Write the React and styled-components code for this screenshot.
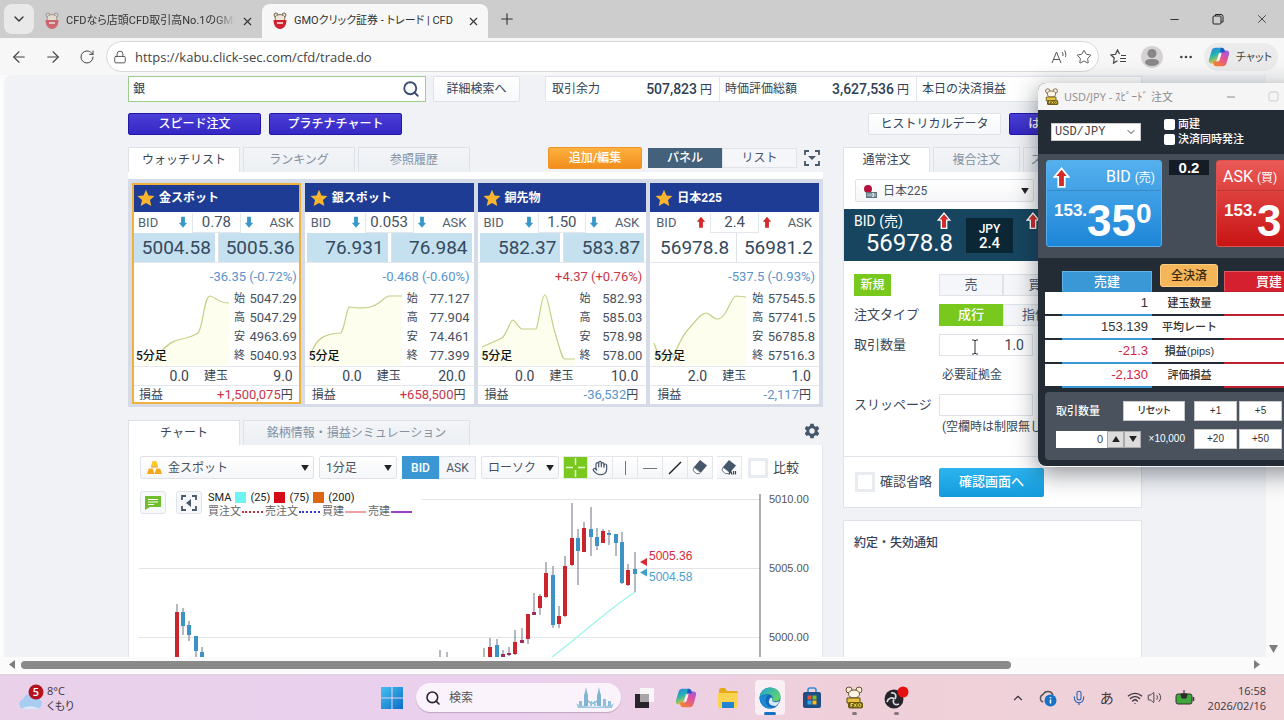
import React from "react";
import styled, { createGlobalStyle, css } from "styled-components";
import {
  ArrowLeft, ArrowRight, RotateCw, Lock, Star, X, Plus, Minus, ChevronDown, ChevronUp,
  Search, Ellipsis, Mic, Wifi, Volume2, Hand,
} from "lucide-react";

const webFont = `Roboto, "Noto Sans CJK JP", sans-serif`;
const uiFont = `"Open Sans", "Noto Sans CJK JP", sans-serif`;
const winFont = `"Liberation Sans", "Noto Sans CJK JP", sans-serif`;

const Global = createGlobalStyle`
  * { box-sizing: border-box; }
  body { margin: 0; overflow: hidden; font-family: ${webFont}; font-size: 12px; line-height: 16px; color: #3a4656; }
  button, input, select { font: inherit; color: inherit; margin: 0; padding: 0; border: 0; background: none; }
  svg { display: block; flex: none; }
  a { color: inherit; text-decoration: none; }
`;

const Desktop = styled.div`
  height: 100vh; display: flex; flex-direction: column; overflow: hidden; position: relative; background: #f7f7f7;
`;

/* ---------- browser chrome ---------- */
const TabStrip = styled.div`
  height: 38px; flex: none; display: flex; align-items: center; background: #cdcdcd; padding-left: 4px; font-family: ${uiFont}; color: #333;
`;
const StripButton = styled.button`
  width: ${p => p.$w || 30}px; height: 30px; border-radius: 8px; display: flex; align-items: center; justify-content: center;
  background: ${p => (p.$fill ? "#e9e9e9" : "transparent")};
`;
const BrowserTab = styled.div`
  display: flex; align-items: center; gap: 6px; height: 34px; padding: 0 8px 0 10px; align-self: flex-end; width: ${p => p.$w}px;
  font-size: 11px; font-family: ${webFont}; white-space: nowrap; font-feature-settings: "palt";
  border-radius: 8px 8px 0 0; background: ${p => (p.$active ? "#f7f7f7" : "transparent")};
  > span { flex: 1; overflow: hidden; ${p => !p.$active && css`mask-image: linear-gradient(90deg, #000 88%, transparent);`} }
`;
const WindowButtons = styled.div`
  margin-left: auto; display: flex; gap: 14px; padding-right: 7px;
`;
const Toolbar = styled.div`
  height: 37px; flex: none; display: flex; align-items: center; background: #f7f7f7; padding: 0 6px 0 4px; font-family: ${uiFont}; color: #444;
`;
const NavButton = styled.button`
  width: ${p => p.$w || 34}px; height: 30px; display: flex; align-items: center; justify-content: center;
`;
const Address = styled.label`
  flex: 1; height: 31px; display: flex; align-items: center; gap: 8px; border: 1px solid #d8d8d8; border-radius: 16px; background: #fff; padding: 0 6px; margin-left: 4px;
  input { flex: 1; outline: 0; font-size: 13px; color: #444; }
`;
const ChatPill = styled.button`
  display: flex; align-items: center; gap: 6px; height: 28px; width: 74px; padding: 0 4px; border-radius: 14px; background: #ebebeb; font-size: 11px; font-feature-settings: "palt"; white-space: nowrap;
`;

/* ---------- scroll frame ---------- */
const Frame = styled.div`
  flex: 1; min-height: 0; display: grid; grid-template: minmax(0, 1fr) 15px / minmax(0, 1fr) 15px; padding: 0 3px 2px 4px; background: #fbfbfb;
  border-bottom: 1px solid #ddd4dd;
`;
const Page = styled.main`
  overflow: hidden; background: #f0f2f6; border-top-left-radius: 8px; padding: 1px 124px 0; display: flex; flex-direction: column;
`;
const VScroll = styled.div`
  grid-row: 1; grid-column: 2; background: #fafafa; display: flex; flex-direction: column; justify-content: flex-end; align-items: center; padding-bottom: 4px;
`;
const HScroll = styled.div`
  grid-column: 1 / 3; display: flex; align-items: center; padding: 0 20px 0 4px; gap: 6px; background: #fbfbfb;
`;
const Thumb = styled.div`
  flex: none; width: 79%; height: 8px; border-radius: 4px; background: #8a8a8a;
`;

/* ---------- page header ---------- */
const HeadRow = styled.div`
  display: flex; height: 26px; flex: none;
`;
const SearchBox = styled.form`
  width: 298px; border: 1px solid #9fcd8c; background: #fff; display: flex; align-items: center; padding: 0 5px 0 4px;
  input { flex: 1; outline: 0; color: #333; }
`;
const PlainButton = styled.button`
  height: ${p => p.$h || 22}px; width: ${p => p.$w}px; background: linear-gradient(#fff, #f6f8fa); border: 1px solid #dfe3e9; border-radius: 2px; color: #34435a;
`;
const DetailButton = styled(PlainButton)`
  margin: 0 25px 0 7px;
`;
const Account = styled.dl`
  flex: 1; min-width: 0; margin: 0; display: flex; background: #fff; border: 1px solid #e2e6ec; overflow: hidden;
`;
const AccountItem = styled.div`
  flex: ${p => (p.$w ? "none" : 1)}; width: ${p => (p.$w ? p.$w + "px" : "auto")}; display: flex; align-items: center; justify-content: space-between; padding: 0 7px 0 6px; color: #2f3f55; white-space: nowrap;
  & + & { border-left: 1px solid #e2e6ec; padding-left: 5px; }
  dd { margin: 0; }
  b { font-weight: 500; font-size: 14px; }
`;
const ActionRow = styled.div`
  display: flex; gap: 8px; margin-top: 11px; flex: none;
`;
const BlueButton = styled.button`
  width: 133px; height: 22px; border-radius: 2px; border: 1px solid #2417a8; background: linear-gradient(#4a3fd6, #3527c4); color: #fff; font-weight: 500;
`;
const Spacer = styled.div`
  flex: 1;
`;
const Columns = styled.div`
  flex: 1; min-height: 0; margin-top: 12px; display: grid; grid-template-columns: minmax(0, 695fr) minmax(0, 299fr); column-gap: 20px;
`;
const Column = styled.section`
  display: flex; flex-direction: column; min-width: 0; min-height: 0;
`;
const Tabs = styled.div`
  display: flex; gap: 3px; height: 25px; flex: none; overflow: ${p => (p.$clip ? "hidden" : "visible")};
`;
const Tab = styled.button`
  flex: none; width: ${p => p.$w}px; height: 25px; white-space: nowrap;
  border: 1px solid #dde2e9; border-bottom: 0; 
  background: ${p => (p.$active ? "#fff" : "linear-gradient(#f3f5f8, #eceff3)")};
  color: ${p => (p.$active ? "#3a4656" : "#8391a3")};
`;
const TabTools = styled.div`
  margin-left: auto; display: flex; align-items: center; height: 22px; padding-right: 2px;
`;
const OrangeButton = styled.button`
  width: 94px; height: 22px; margin-right: 6px; border-radius: 2px; background: linear-gradient(#fdb040, #f28e1c); border: 1px solid #ee9326; color: #fff; font-weight: 500;
`;
const SwitchButton = styled.button`
  width: ${p => p.$w || 74}px; height: ${p => p.$h || 20}px; font-weight: ${p => (p.$on ? 500 : 400)};
  background: ${p => (p.$on ? p.$on : "#f4f6f9")}; color: ${p => (p.$on ? "#fff" : "#4a586c")};
  border: 1px solid ${p => p.$on || "#dfe3e9"};
`;
const IconButton = styled.button`
  display: flex; align-items: center; justify-content: center; width: ${p => p.$w || 18}px; height: ${p => p.$h || 18}px; margin-left: ${p => p.$ml || 0}px;
`;

/* ---------- watch list ---------- */
const WatchPanel = styled.div`
  background: #d6dce7; border-top: 7px solid #fff; padding: 4px 4px 3px; display: grid; grid-template-columns: repeat(4, minmax(0, 1fr)); gap: 4px; margin-bottom: 13px; flex: none;
`;
const Card = styled.article`
  background: #fff; ${p => p.$selected && css`outline: 2px solid #f0b13c; outline-offset: -2px;`}
`;
const CardTitle = styled.h3`
  margin: 0; height: 29px; background: #1f3c94; color: #fff; font-size: 12px; font-weight: 700; display: flex; align-items: center; gap: 4px; padding-left: 5px;
`;
const SpreadRow = styled.div`
  height: 21px; display: grid; grid-template-columns: 36px 18px 1fr 16px 42px; align-items: center; font-size: 13px; color: #55606f; padding: 0 2px 0 6px;
  b { font-weight: 400; font-size: 15px; text-align: center; border: 1px solid #e4e8ee; border-top: 0; height: 20px; line-height: 18px; color: #45515f; }
  span:last-child { text-align: right; padding-right: 5px; }
  svg { justify-self: center; }
`;
const PriceRow = styled.div`
  height: 30px; display: grid; grid-template-columns: 1fr 1fr; gap: 3px; padding: 0 2px; border-bottom: 1px solid #e4e8ee;
`;
const PriceButton = styled.button`
  text-align: right; padding-right: 4px; font-size: 19px; color: #344a60; background: ${p => (p.$lit ? "#c5e0ee" : "#fff")};
  & + & { border-left: ${p => (p.$lit ? 0 : "1px solid #dde2e9")}; }
`;
const Change = styled.div`
  height: 28px; line-height: 28px; text-align: right; padding-right: 4px; font-size: 13px; color: ${p => (p.$up ? "#c9364a" : "#5b94c9")};
`;
const CardBody = styled.div`
  height: 75px; position: relative; display: flex; justify-content: space-between; padding-right: 4px;
`;
const Frequency = styled.span`
  position: absolute; left: 4px; bottom: 2px; font-weight: 500; color: #111; font-size: 12px;
`;
const Ohlc = styled.dl`
  margin: -2px 0 0; flex: 1; display: grid; grid-template-columns: 14px 1fr; grid-auto-rows: 19px; align-items: center;
  dt { font-size: 11px; line-height: 18px; }
  dd { margin: 0; text-align: right; font-size: 13px; color: #45515f; line-height: 18px; }
`;
const PositionRow = styled.div`
  height: 19px; border-top: 1px solid #e4e8ee; display: grid; grid-template-columns: 57px 54px 1fr; align-items: center; font-size: 14px; padding-right: 8px;
  span { text-align: right; } em { font-style: normal; font-size: 12px; text-align: center; }
`;
const ProfitRow = styled.div`
  height: 19px; border-top: 1px solid #e4e8ee; display: flex; justify-content: space-between; align-items: center; padding: 0 8px 0 7px;
  b { font-weight: 400; font-size: 13px; color: ${p => (p.$up ? "#c9364a" : "#5b94c9")}; }
`;

/* ---------- chart ---------- */
const ChartPanel = styled.div`
  flex: 1; min-height: 0; background: #fff; border: 1px solid #e1e5eb; border-width: 0 1px; position: relative; overflow: hidden;
`;
const ChartTools = styled.div`
  display: flex; align-items: center; padding: 11px 0 1px 11px; height: 35px;
`;
const SelectWrap = styled.span`
  width: ${p => p.$w}px; height: 23px; display: flex; align-items: center; gap: 6px; padding: 0 4px 0 6px; margin: 0 ${p => p.$mr || 0}px 0 ${p => p.$ml || 0}px;
  border: 1px solid #dfe3e9; border-radius: 2px; background: linear-gradient(#fff, #f5f6f8); color: #45515f;
  select { appearance: none; flex: 1; min-width: 0; outline: 0; }
`;
const ToolButton = styled.button`
  width: 25px; height: 23px; display: flex; align-items: center; justify-content: center; border: 1px solid #e3e6eb; margin-right: ${p => p.$mr || 0}px;
  background: ${p => (p.$on ? "#78c81e" : "linear-gradient(#fff, #f5f6f8)")}; color: #4a586c;
  & + & { border-left-width: 0; }
`;
const CheckLabel = styled.label`
  display: flex; align-items: center; gap: 5px; font-size: 13px;
  input { appearance: none; width: 20px; height: 20px; border: 3px solid #e8ebef; background: #fff; }
`;
const ChartArea = styled.div`
  position: relative;
  > svg { width: 100%; }
`;
const Legend = styled.div`
  position: absolute; left: 11px; top: 4px; display: flex; gap: 10px; align-items: center; background: #fff; padding-right: 8px; height: 37px;
`;
const LegendButton = styled.button`
  width: 26px; height: 23px; display: flex; align-items: center; justify-content: center; border: 1px solid #e0e4ea; border-radius: 3px; background: #f7f8fa;
`;
const LegendText = styled.div`
  margin-left: -4px; padding-top: 4px; color: #222; line-height: 14px; white-space: nowrap;
`;
const LegendLine = styled.div`
  display: flex; align-items: center; gap: ${p => p.$gap}px; font-size: 11px; color: ${p => p.$color || "#222"};
`;
const Swatch = styled.i`
  width: 11px; height: 11px; background: ${p => p.$c};
`;
const Rule = styled.i`
  width: 21px; border-top: 2px ${p => p.$s} ${p => p.$c}; margin: 0 2px 0 1px;
`;

/* ---------- order column ---------- */
const OrderPanel = styled.div`
  background: #fff; border: 1px solid #dfe3e9; border-top: 0; padding-top: 7px; margin-bottom: 12px; flex: none;
`;
const FormSelect = styled.div`
  padding-left: 11px; height: 23px;
`;
const RateBand = styled.div`
  margin-top: 7px; height: 52px; background: #17455f; color: #fff; display: grid; grid-template-columns: 99px 47px 1fr; column-gap: 13px; padding: 0 11px 0 10px; overflow: hidden;
`;
const RateSide = styled.div`
  font-size: 14px; line-height: 22px; padding-top: 1px;
  div { display: flex; justify-content: space-between; align-items: center; height: 22px; padding-right: 2px; white-space: nowrap; }
  strong { display: block; font-weight: 400; font-size: 24px; line-height: 22px; text-align: right; }
`;
const RateSpread = styled.div`
  margin: 9px 0 8px; background: #0b2736; display: flex; flex-direction: column; align-items: center; justify-content: center; font-size: 12px; line-height: 14px; font-weight: 500;
  b { font-size: 15px; font-weight: 500; }
`;
const FormGrid = styled.div`
  padding: 9px 0 0 10px; border-bottom: 1px solid #e1e5eb; 
`;
const FormRow = styled.div`
  height: 30px; display: grid; grid-template-columns: 85px 1fr; align-items: center; font-size: 13px; white-space: nowrap;
  input { width: 94px; height: 22px; border: 1px solid #dfe3e9; text-align: right; padding-right: 8px; font-size: 14px; outline: 0; background: #fff; }
`;
const NewBadge = styled.span`
  display: inline-block; width: 37px; height: 22px; line-height: 22px; text-align: center; background: #78c81e; color: #fff; font-weight: 500; font-size: 12px;
`;
const Choices = styled.div`
  display: flex;
`;
const QuantityCell = styled.div`
  position: relative;
  > svg { position: absolute; left: 32px; top: 5px; }
`;
const Note = styled.div`
  padding-left: 3px; font-size: 12px;
`;
const SlipNote = styled.p`
  margin: 0 0 22px 85px; padding-left: 3px; line-height: 14px; white-space: nowrap;
`;
const ConfirmRow = styled.div`
  height: 50px; padding-left: 11px; display: grid; grid-template-columns: 84px 105px; align-items: center;
`;
const ConfirmButton = styled.button`
  height: 29px; border-radius: 2px; background: linear-gradient(#2cb4ef, #149bdc); color: #fff; font-weight: 500; font-size: 13px;
`;
const NoticePanel = styled.div`
  flex: 1; background: #fff; border: 1px solid #dfe3e9; border-bottom: 0; padding: 14px 10px;
  h2 { margin: 0; font-size: 12px; font-weight: 500; color: #34435a; }
`;

/* ---------- speed-order window ---------- */
const SpeedWindow = styled.aside`
  position: absolute; left: 1038px; top: 83px; width: 420px; background: #232b35; border-radius: 8px; overflow: hidden; font-family: ${winFont};
  padding-bottom: 6px;
`;
const SpeedShadow = styled.div`
  position: absolute; left: 1038px; top: 83px; width: 420px; height: 384px; border-radius: 8px; box-shadow: 0 6px 24px rgba(20, 28, 40, 0.5);
`;
const SpeedTitle = styled.header`
  height: 27px; background: #f6f5f6; display: flex; align-items: center; gap: 5px; padding-left: 6px; color: #8c8c8c; font-family: ${uiFont}; font-size: 11px;
  span { width: 156px; white-space: nowrap; }
  button { width: 38px; display: flex; }
`;
const SpeedTop = styled.div`
  height: 44px; display: flex; align-items: center; gap: 23px; padding-left: 13px; color: #fff; font-size: 11px; font-weight: 500;
`;
const PairSelect = styled(SelectWrap)`
  height: 18px; border-radius: 0; border-color: #ccc; background: #fff; color: #444; padding: 0 3px; font-size: 12px; font-family: "Liberation Mono", monospace; font-weight: 400;
`;
const SpeedChecks = styled.div`
  display: flex; flex-direction: column;
  label { display: flex; align-items: center; gap: 3px; line-height: 15px; white-space: nowrap; }
  input { appearance: none; width: 11px; height: 11px; background: #fff; border-radius: 2px; }
`;
const SpeedPrices = styled.div`
  height: 104px; background: #454e58; display: grid; grid-template-columns: 116px 40px 116px; column-gap: 7px; padding: 6px 7px 11px 8px; align-items: start;
`;
const PriceTile = styled.button`
  height: 87px; border-radius: 3px; color: #fff; text-align: left; display: flex; flex-direction: column;
  background: ${p => (p.$sell ? "linear-gradient(#55b0ee, #1d86d8)" : "linear-gradient(#ea5a56, #c81414)")};
  border: 1px solid ${p => (p.$sell ? "#58aeea" : "#e0504c")};
`;
const TileHead = styled.span`
  height: 30px; width: 100%; display: flex; align-items: center; justify-content: ${p => (p.$sell ? "space-between" : "flex-start")}; padding: 4px 6px 0; border-bottom: 1px solid rgba(0, 0, 0, 0.15); font-size: 16px; white-space: nowrap; font-family: Roboto, "Noto Sans CJK JP", sans-serif;
  small { font-size: 12px; }
`;
const TileRate = styled.span`
  display: flex; align-items: flex-start; padding: 9px 0 0 7px; font-weight: 700; font-size: 17px; line-height: 22px;
  b { font-size: 44px; line-height: 42px; } i { font-style: normal; font-size: 28px; line-height: 28px; }
`;
const SpeedSpread = styled.div`
  height: 15px; background: #141c25; color: #fff; font-weight: 700; font-size: 15px; line-height: 15px; text-align: center;
`;
const SpeedHeads = styled.div`
  height: 33px; display: flex; align-items: flex-end; padding-left: 24px;
`;
const SideHead = styled.div`
  width: ${p => (p.$sell ? 90 : 90)}px; height: 20px; line-height: 20px; text-align: center; color: #fff; font-size: 13px; font-weight: 500; background: ${p => (p.$sell ? "#3b98d6" : "#d4202f")};
  border: 1px solid ${p => (p.$sell ? "#62b3e6" : "#e0585f")}; border-bottom: 0;
`;
const SettleButton = styled.button`
  align-self: flex-start; width: 58px; height: 23px; margin: 6px 6px 0 8px; border-radius: 3px; background: #f5b65a; border: 1px solid #ffce80; color: #3a2a10; font-size: 12px; font-weight: 500;
`;
const PositionTable = styled.table`
  margin-left: 7px; width: 413px; border-spacing: 0 2px; table-layout: fixed; line-height: 16px; font-size: 13px; color: #333; margin-top: -1px;
  background: linear-gradient(90deg, #232b35 17px, #3b98d6 17px 107px, #232b35 107px 179px, #c02030 179px);
  th, td { background: #fff; height: 22px; padding: 0; }
  td { text-align: right; }
  th { font-size: 11px; font-weight: 500; text-align: center; }
`;
const Col = styled.col`
  width: ${p => p.$w}px;
`;
const Amount = styled.td`
  && { color: ${p => (p.$minus ? "#d2243f" : "#333")}; }
`;
const SpeedBottom = styled.div`
  margin: 4px 0 0 7px; background: #4a535d; height: 68px; display: grid; grid-template-columns: 129px 1fr; grid-auto-rows: 28px; column-gap: 9px; padding: 5px 0 0 11px; align-items: center; color: #fff; font-size: 11px; border-radius: 4px;
`;
const Quantity = styled.div`
  display: flex; align-items: center; justify-content: space-between; white-space: nowrap; font-weight: ${p => (p.$strong ? 500 : 400)};
`;
const Spinner = styled.div`
  display: flex; height: 17px;
  input { width: 51px; background: #fff; color: #444; text-align: right; padding-right: 4px; }
  button { width: 17px; background: #dcdcdc; border: 1px solid #aaa; display: flex; align-items: center; justify-content: center; }
`;
const Multiplier = styled.span`
  font-size: 10px;
`;
const WhiteButton = styled.button`
  width: ${p => p.$w}px; height: 20px; flex: none; background: #fff; color: #333; font-size: 10px; border: 1px solid #c9c9c9; font-feature-settings: "palt";
`;
const Steps = styled.div`
  display: flex; gap: 2px; 
`;

/* ---------- taskbar ---------- */
const Taskbar = styled.footer`
  height: 45px; flex: none; display: flex; align-items: center; background: linear-gradient(90deg, #e9d1ea, #ead0ee 40%, #efd0da 65%, #efd2d8); font-family: ${uiFont}; color: #3c3640; font-size: 11px; line-height: 15px;
`;
const TaskSide = styled.div`
  flex: 1 1 0; display: flex; align-items: center; justify-content: ${p => (p.$end ? "flex-end" : "flex-start")}; gap: ${p => (p.$end ? 13 : 3)}px; padding: 0 18px 0 16px;
  font-feature-settings: "palt";
`;
const TrayGroup = styled.div`
  display: flex; align-items: center; gap: 4px;
`;
const Kana = styled.span`
  font-size: 14px;
`;
const TaskCenter = styled.div`
  display: flex; align-items: center; gap: 12px; padding-left: 7px;
`;
const TaskSearch = styled.label`
  width: 205px; height: 29px; border-radius: 15px; background: #fbf3fb; display: flex; align-items: center; gap: 8px; padding: 0 4px 0 9px; margin-right: -4px;
  box-shadow: 0 1px 1px rgba(120, 80, 120, 0.35);
  input { flex: 1; min-width: 0; outline: 0; font-size: 12px; } input::placeholder { color: #555; opacity: 1; }
`;
const TaskIcon = styled.button`
  width: 30px; height: 35px; display: flex; flex-direction: column; align-items: center; justify-content: center; border-radius: 4px; position: relative; background: ${p => (p.$active ? "#f9eff5" : "transparent")};
  &::after { content: ""; position: absolute; bottom: 0; height: 3px; border-radius: 2px; width: ${p => (p.$active ? 12 : p.$open ? 5 : 0)}px; background: ${p => (p.$active ? "#1672c4" : "#87757f")}; }
`;
const Clock = styled.time`
  text-align: right; 
`;

/* ---------- drawings ---------- */
const BearCup = ({ faded }) => (
  <svg width="16" height="18" viewBox="0 0 16 18" opacity={faded ? 0.6 : 1}>
    <circle cx="4" cy="3" r="2" fill="#e8d9c4" stroke="#77685a" /><circle cx="12" cy="3" r="2" fill="#e8d9c4" stroke="#77685a" />
    <ellipse cx="8" cy="6" rx="5" ry="3.4" fill="#f2e7d6" stroke="#77685a" />
    <path d="M1.500 8H14.500C14.500 13 12 17 8 17S1.500 13 1.500 8Z" fill="#cf2230" /><path d="M5 11h6" stroke="#fff" strokeWidth="1.400" />
  </svg>
);
const FxoMouse = ({ size = 18 }) => (
  <svg width={size} height={size * 1.15} viewBox="0 0 20 23">
    <circle cx="5" cy="4" r="3" fill="#f5ead2" stroke="#6b5434" /><circle cx="15" cy="4" r="3" fill="#f5ead2" stroke="#6b5434" />
    <ellipse cx="10" cy="8" rx="5.500" ry="4" fill="#fdf6e6" stroke="#6b5434" />
    <path d="M3 12h13v5H3z" fill="#e8c33f" stroke="#5d4a12" /><rect x="4" y="16" width="15" height="6.500" rx="2" fill="#6b5a13" />
    <path d="M7 21v-3.500h2M7 19.300h1.500M10 17.500l2.500 3.500M12.500 17.500L10 21" stroke="#f4dc58" strokeWidth="1" fill="none" /><circle cx="15.500" cy="19.200" r="1.500" fill="none" stroke="#f4dc58" />
  </svg>
);
const Copilot = ({ size = 22 }) => (
  <svg width={size} height={size} viewBox="0 0 24 24">
    <defs>
      <linearGradient id="cpa" x1="0" y1="0" x2="0.4" y2="1"><stop offset="0" stopColor="#2b7de9" /><stop offset=".5" stopColor="#25b5b0" /><stop offset="1" stopColor="#f0c52e" /></linearGradient>
      <linearGradient id="cpb" x1="1" y1="0" x2="0.4" y2="1"><stop offset="0" stopColor="#9b5bea" /><stop offset=".5" stopColor="#e0529c" /><stop offset="1" stopColor="#f47b3c" /></linearGradient>
    </defs>
    <path d="M8 2h7c1.800 0 2.600 1 3 2.500L18.500 7H14c-1.500 0-2.200.8-2.600 2L9 17c-.5 1.600-1.300 2-2.700 2H4c-2.500 0-3.500-1.800-3-4L4 5c.6-2 2-3 4-3Z" fill="url(#cpa)" />
    <path d="M16 22H9c-1.800 0-2.600-1-3-2.500L5.500 17H10c1.500 0 2.200-.8 2.600-2L15 7c.5-1.600 1.300-2 2.700-2H20c2.500 0 3.500 1.800 3 4l-3 10c-.6 2-2 3-4 3Z" fill="url(#cpb)" />
    <path d="M14 2c2.500 0 3.500 1 4 2.700L18.500 7H13Z" fill="#2156c9" />
    <path d="M12.600 9h1.800l-2 6.500h-1.800z" fill="#fff" opacity=".8" />
  </svg>
);
const GoldStar = () => (
  <svg width="18" height="18" viewBox="0 0 24 24"><path d="M12 1l3.300 7.500 8 .8-6 5.400 1.800 8L12 18.500l-7.100 4.200 1.800-8-6-5.400 8-.8z" fill="#f7b52e" /></svg>
);
const PriceArrow = ({ up, size = 10, outlined }) => (
  <svg width={size} height={size * 1.25} viewBox="0 0 12 15">
    <path d={up ? "M6 1l5 6H8.300v7H3.700V7H1z" : "M6 14l5-6H8.300V1H3.700v7H1z"} fill={up ? "#d42a2a" : "#3a97c9"} stroke={outlined ? "#fff" : "none"} strokeWidth="1.200" />
  </svg>
);
const Caret = ({ up }) => (
  <svg width="8" height="6" viewBox="0 0 9 7"><path d={up ? "M4.500 0L9 7H0z" : "M0 0h9L4.500 7z"} fill="#222" /></svg>
);
const ScrollArrow = ({ d }) => <svg width="7" height="9" viewBox="0 0 7 9"><path d={d} fill="#7d7d7d" /></svg>;
const Corners = ({ left }) => (
  <svg width="16" height="16" viewBox="0 0 16 16">
    <path d="M1 5V1h4M11 1h4v4M15 11v4h-4M5 15H1v-4" fill="none" stroke="#4a586c" strokeWidth="1.800" />
    <path d={left ? "M10 4v8L5 8z" : "M4 6h8l-4 4z"} fill="#4a586c" />
  </svg>
);
const GoldBars = () => (
  <svg width="15" height="15" viewBox="0 0 16 16"><path d="M6 1h4l2 6H4z" fill="#ffc928" /><path d="M2 9h4l2 6H0z" fill="#f7a71b" /><path d="M10 9h4l2 6H8z" fill="#f7a71b" /><path d="M5 8h6l1-1H4z" fill="#d98c10" /></svg>
);
const JapanIcon = () => (
  <svg width="15" height="14" viewBox="0 0 15 14"><rect width="13" height="9" y="1" fill="#fff" stroke="#e6e6e6" strokeWidth=".5" /><circle cx="6" cy="5" r="4" fill="#b4123c" /><rect x="4" y="8" width="11" height="6" fill="#5f7480" /><path d="M6 12.500v-3M8 9.500v3M10 9.500h1.500v3H10zM13 9.500v3" stroke="#fff" strokeWidth=".8" fill="none" /></svg>
);
const Eraser = ({ all }) => (
  <svg width="18" height="17" viewBox="0 0 18 17">
    <path d="M9 1l7 5.500-6 7-7-5.500z" fill="#46566b" /><path d="M3 8.200l6.500 5.200-1 1.200H5.500L2 11.500z" fill="#fff" stroke="#46566b" strokeWidth=".8" />
    {all && <path d="M9 15.500l1.500-3.500 1.500 3.500M13.500 12v3.500M15.500 12v3.500" fill="none" stroke="#33435a" strokeWidth="1.200" />}
  </svg>
);

/* ---------- data ---------- */
const cards = [
  { name: "金スポット", up: false, spread: "0.78", bid: "5004.58", ask: "5005.36", change: "-36.35 (-0.72%)", ohlc: ["5047.29", "5047.29", "4963.69", "5040.93"], sell: "0.0", buy: "9.0", pl: "+1,500,075", lit: true, selected: true,
    path: "M29 60C38 52 42 49 50 48C58 46 62 45 66 42C71 37 72 5 78 5C83 5 85 12 97 12" },
  { name: "銀スポット", up: false, spread: "0.053", bid: "76.931", ask: "76.984", change: "-0.468 (-0.60%)", ohlc: ["77.127", "77.904", "74.461", "77.399"], sell: "0.0", buy: "20.0", pl: "+658,500", lit: true,
    path: "M7 60C12 48 18 43 36 42C40 36 41 20 44 16C52 17 62 18 68 15C76 12 80 5 84 5L97 5" },
  { name: "銅先物", up: false, spread: "1.50", bid: "582.37", ask: "583.87", change: "+4.37 (+0.76%)", ohlc: ["582.93", "585.03", "578.98", "578.00"], sell: "0.0", buy: "10.0", pl: "-36,532", lit: true, changeUp: true,
    path: "M4 56L24 47C29 43 32 29 35 29C38 30 41 38 44 38L58 38C61 34 63 4 67 4C70 4 73 30 78 45C82 58 84 68 87 68L97 68" },
  { name: "日本225", up: true, spread: "2.4", bid: "56978.8", ask: "56981.2", change: "-537.5 (-0.93%)", ohlc: ["57545.5", "57741.5", "56785.8", "57516.3"], sell: "2.0", buy: "1.0", pl: "-2,117",
    path: "M4 52L9 66L23 66C32 46 35 41 42 34C48 27 52 22 56 22C60 22 63 28 67 28C77 28 81 5 86 5L96 6" },
];
/* x, high, low, body top, body bottom, colour */
const R = "#c9252d", B = "#3d93c6", P = "#9c2f5c", N = "none";
const candles = [
  [177, 604, 657, 612, 657, R], [183, 608, 635, 612, 626, B], [189, 621, 641, 625, 635, B], [196, 636, 657, 636, 651, B], [202, 647, 657, 652, 657, B],
  [440, 650, 657, 650, 650, N], [447, 652, 657, 652, 652, N], [484, 648, 657, 648, 648, N], [490, 638, 657, 647, 657, R], [497, 639, 657, 645, 657, B],
  [503, 650, 657, 654, 657, P], [509, 647, 656, 653, 655, P], [515, 630, 655, 642, 654, R], [522, 628, 643, 640, 643, P], [528, 614, 644, 614, 639, R],
  [534, 593, 615, 612, 615, P], [540, 594, 615, 596, 608, R], [546, 562, 598, 573, 597, R], [553, 566, 628, 575, 625, B], [559, 606, 628, 616, 624, R],
  [565, 556, 617, 566, 616, R], [572, 503, 566, 538, 565, R], [578, 529, 585, 538, 551, B], [584, 522, 552, 528, 552, R], [591, 507, 556, 529, 537, B],
  [597, 528, 550, 537, 546, B], [603, 529, 543, 531, 543, R], [609, 530, 545, 533, 535, B], [616, 534, 556, 534, 543, B], [622, 532, 584, 542, 583, B],
  [628, 564, 586, 570, 585, R], [635, 552, 592, 569, 574, B],
];
const positions = [["1", "建玉数量"], ["153.139", "平均レート"], ["-21.3", "損益(pips)"], ["-2,130", "評価損益"]];

function WatchCard({ c }) {
  return (
    <Card $selected={c.selected}>
      <CardTitle><GoldStar />{c.name}</CardTitle>
      <SpreadRow><span>BID</span><PriceArrow up={c.up} /><b>{c.spread}</b><PriceArrow up={c.up} /><span>ASK</span></SpreadRow>
      <PriceRow><PriceButton $lit={c.lit}>{c.bid}</PriceButton><PriceButton $lit={c.lit}>{c.ask}</PriceButton></PriceRow>
      <Change $up={c.changeUp}>{c.change}</Change>
      <CardBody>
        <svg width="102" height="75" viewBox="0 0 102 75">
          <path d={`${c.path}V74H4Z`} fill="#fdfeee" /><path d={c.path} fill="none" stroke="#c3cf86" strokeWidth="1.200" />
        </svg>
        <Frequency>5分足</Frequency>
        <Ohlc>{["始", "高", "安", "終"].map((k, i) => <React.Fragment key={k}><dt>{k}</dt><dd>{c.ohlc[i]}</dd></React.Fragment>)}</Ohlc>
      </CardBody>
      <PositionRow><span>{c.sell}</span><em>建玉</em><span>{c.buy}</span></PositionRow>
      <ProfitRow $up={c.pl[0] === "+"}><span>損益</span><span><b>{c.pl}</b>円</span></ProfitRow>
    </Card>
  );
}

function PriceChart() {
  return (
    <svg height="177" viewBox="129 480 693 177" preserveAspectRatio="xMinYMin slice">
      {[499, 568, 637].map(y => <path key={y} d={`M139 ${y}.500H760`} stroke="#e2e4e7" />)}
      <path d="M760 494V657" stroke="#777" strokeWidth="1.200" />
      <path d="M552 657C575 640 605 612 635 592" fill="none" stroke="#9df5ea" strokeWidth="1.300" />
      {candles.map(([x, h, l, t, b, c]) => (
        <g key={x}><path d={`M${x} ${h}V${l}`} stroke="#6d7480" /><rect x={x - 2} y={t} width="4" height={b - t} fill={c} /></g>
      ))}
      <path d="M640 562l7-4v8z" fill="#d42a3a" /><path d="M640 572.500l7-4v8z" fill="#3d9fcb" />
      <g fontFamily="Liberation Sans" fontSize="12"><text x="649" y="560" fill="#d42a3a">5005.36</text><text x="649" y="581" fill="#4a9fd4">5004.58</text></g>
      <g fontFamily="Liberation Sans" fontSize="11" fill="#555"><text x="769" y="503">5010.00</text><text x="769" y="572">5005.00</text><text x="769" y="641">5000.00</text></g>
    </svg>
  );
}

function SpeedOrder() {
  return (
    <>
      <SpeedShadow />
      <SpeedWindow>
        <SpeedTitle><FxoMouse size={15} /><span>USD/JPY - ｽﾋﾟｰﾄﾞ 注文</span><button aria-label="最小化"><Minus size={12} /></button><button aria-label="最大化"><svg width="11" height="11"><rect x="1" y="1" width="9" height="9" rx="2" fill="none" stroke="#ccc" /></svg></button></SpeedTitle>
        <SpeedTop>
          <PairSelect $w={90}><select aria-label="通貨ペア"><option>USD/JPY</option></select><ChevronDown size={12} /></PairSelect>
          <SpeedChecks><label><input type="checkbox" />両建</label><label><input type="checkbox" />決済同時発注</label></SpeedChecks>
        </SpeedTop>
        <SpeedPrices>
          <PriceTile $sell><TileHead $sell><PriceArrow up outlined size={17} /><span>BID <small>(売)</small></span></TileHead><TileRate>153.<b>35</b><i>0</i></TileRate></PriceTile>
          <SpeedSpread>0.2</SpeedSpread>
          <PriceTile><TileHead><span>ASK <small>(買)</small></span></TileHead><TileRate>153.<b>3</b></TileRate></PriceTile>
        </SpeedPrices>
        <SpeedHeads><SideHead $sell>売建</SideHead><SettleButton>全決済</SettleButton><SideHead>買建</SideHead></SpeedHeads>
        <PositionTable>
          <colgroup><Col $w={103} /><Col $w={83} /><Col $w={227} /></colgroup>
          <tbody>{positions.map(([v, k]) => <tr key={k}><Amount $minus={v[0] === "-"}>{v}</Amount><th scope="row">{k}</th><td /></tr>)}</tbody>
        </PositionTable>
        <SpeedBottom>
          <Quantity $strong><span>取引数量</span><WhiteButton $w={62}>リセット</WhiteButton></Quantity>
          <Steps><WhiteButton $w={43}>+1</WhiteButton><WhiteButton $w={43}>+5</WhiteButton></Steps>
          <Quantity><Spinner><input aria-label="取引数量" defaultValue="0" /><button aria-label="増やす"><Caret up /></button><button aria-label="減らす"><Caret /></button></Spinner><Multiplier>×10,000</Multiplier></Quantity>
          <Steps><WhiteButton $w={43}>+20</WhiteButton><WhiteButton $w={43}>+50</WhiteButton></Steps>
        </SpeedBottom>
      </SpeedWindow>
    </>
  );
}

export default function App() {
  return (
    <Desktop>
      <Global />
      <TabStrip>
        <StripButton $fill aria-label="タブ一覧"><ChevronDown size={16} /></StripButton>
        <BrowserTab $w={228}><BearCup faded /><span>CFDなら店頭CFD取引高No.1のGMO</span><X size={13} /></BrowserTab>
        <BrowserTab $w={226} $active><BearCup /><span>GMOクリック証券 - トレード | CFD</span><X size={13} /></BrowserTab>
        <StripButton $w={38} aria-label="新しいタブ"><Plus size={18} strokeWidth={1.5} /></StripButton>
        <WindowButtons>
          <StripButton aria-label="最小化"><Minus size={13} /></StripButton><StripButton aria-label="元に戻す"><svg width="12" height="12" viewBox="0 0 12 12" fill="none" stroke="#222"><rect x="1" y="3" width="8" height="8" rx="1" /><path d="M3.500 3V1.500H9a2 2 0 0 1 2 2V9H9" /></svg></StripButton><StripButton aria-label="閉じる"><X size={14} strokeWidth={1.5} /></StripButton>
        </WindowButtons>
      </TabStrip>
      <Toolbar>
        <NavButton $w={30} aria-label="戻る"><ArrowLeft size={18} strokeWidth={1.5} /></NavButton>
        <NavButton $w={38} aria-label="進む"><ArrowRight size={18} strokeWidth={1.5} /></NavButton>
        <NavButton $w={30} aria-label="更新"><RotateCw size={16} strokeWidth={1.5} /></NavButton>
        <Address>
          <Lock size={14} strokeWidth={1.5} /><input aria-label="アドレス" defaultValue="https://kabu.click-sec.com/cfd/trade.do" />
          <svg width="17" height="14" viewBox="0 0 17 14" fill="none" stroke="#555"><path d="M1 13L5.500 2L10 13M2.500 9.500h6M11 2c1 1 1.200 2.500.8 4M13.500.5c1.500 2 1.600 4.500 1 6.500" /></svg>
          <Star size={16} strokeWidth={1.3} />
        </Address>
        <NavButton $w={38} aria-label="お気に入り"><svg width="17" height="16" viewBox="0 0 17 16" fill="none" stroke="#444" strokeWidth="1.200"><path d="M9.500 5L7.500 1 5.500 5.300 1 6l3.300 3L3.500 14l4-2.300M11 6.500h5M10 9.500h6M10 12.500h6" /></svg></NavButton>
        <NavButton $w={30} aria-label="プロファイル"><svg width="22" height="22" viewBox="0 0 22 22"><circle cx="11" cy="11" r="11" fill="#d4d2d2" /><circle cx="11" cy="7.500" r="4.500" fill="#8a8886" /><path d="M4 17c0-3 2-4 7-4s7 1 7 4c-2 2-4 3-7 3s-5-1-7-3z" fill="#8a8886" /></svg></NavButton>
        <NavButton $w={37} aria-label="設定"><Ellipsis size={16} /></NavButton>
        <ChatPill><Copilot size={22} />チャット</ChatPill>
      </Toolbar>

      <Frame>
        <Page>
          <HeadRow>
            <SearchBox><input aria-label="銘柄検索" defaultValue="銀" /><Search size={18} strokeWidth={2.5} color="#3c4f70" /></SearchBox>
            <DetailButton $w={87} $h={26}>詳細検索へ</DetailButton>
            <Account>
              <AccountItem $w={173}><dt>取引余力</dt><dd><b>507,823</b> 円</dd></AccountItem>
              <AccountItem $w={197}><dt>時価評価総額</dt><dd><b>3,627,536</b> 円</dd></AccountItem>
              <AccountItem><dt>本日の決済損益</dt></AccountItem>
            </Account>
          </HeadRow>
          <ActionRow>
            <BlueButton>スピード注文</BlueButton><BlueButton>プラチナチャート</BlueButton><Spacer />
            <PlainButton $w={133}>ヒストリカルデータ</PlainButton><BlueButton>はっちゅう君CFD</BlueButton>
          </ActionRow>
          <Columns>
            <Column>
              <Tabs>
                <Tab $w={112} $active>ウォッチリスト</Tab><Tab $w={112}>ランキング</Tab><Tab $w={112}>参照履歴</Tab>
                <TabTools><OrangeButton>追加/編集</OrangeButton><SwitchButton $on="#44617c">パネル</SwitchButton><SwitchButton $w={75}>リスト</SwitchButton><IconButton $ml={6} aria-label="全画面"><Corners /></IconButton></TabTools>
              </Tabs>
              <WatchPanel>{cards.map(c => <WatchCard key={c.name} c={c} />)}</WatchPanel>
              <Tabs>
                <Tab $w={112} $active>チャート</Tab><Tab $w={227}>銘柄情報・損益シミュレーション</Tab>
                <TabTools><IconButton aria-label="設定"><svg width="16" height="16" viewBox="0 0 24 24"><path fillRule="evenodd" fill="#46566b" d="M9.500 1h5l.6 3.200 2.300 1.300 3-1.100 2.500 4.300-2.400 2.100v2.400l2.400 2.100-2.500 4.300-3-1.100-2.300 1.300-.6 3.200h-5l-.6-3.200-2.300-1.300-3 1.100-2.500-4.300 2.400-2.100v-2.400L1.100 8.700l2.500-4.300 3 1.100 2.300-1.300zM12 8a4 4 0 1 0 0 8 4 4 0 0 0 0-8z" /></svg></IconButton></TabTools>
              </Tabs>
              <ChartPanel>
                <ChartTools>
                  <SelectWrap $w={174} $mr={5}><GoldBars /><select aria-label="銘柄"><option>金スポット</option></select><Caret /></SelectWrap>
                  <SelectWrap $w={78} $mr={5}><select aria-label="足種"><option>1分足</option></select><Caret /></SelectWrap>
                  <SwitchButton $w={37} $h={23} $on="#3a97d3">BID</SwitchButton><SwitchButton $w={37} $h={23}>ASK</SwitchButton>
                  <SelectWrap $w={78} $mr={4} $ml={5}><select aria-label="チャート種類"><option>ローソク</option></select><Caret /></SelectWrap>
                  <ToolButton $on aria-label="十字"><svg width="19" height="19"><path d="M9.500 0V7M9.500 12v7M0 9.500H7M12 9.500h7" stroke="#e8ffd0" strokeWidth="1.500" /></svg></ToolButton>
                  <ToolButton aria-label="移動"><Hand size={16} strokeWidth={1.8} /></ToolButton>
                  <ToolButton aria-label="縦線"><svg width="16" height="16"><path d="M8.500 1v14" stroke="#777" /></svg></ToolButton>
                  <ToolButton aria-label="横線"><svg width="16" height="16"><path d="M1 8.500h14" stroke="#777" /></svg></ToolButton>
                  <ToolButton aria-label="斜線"><svg width="16" height="16"><path d="M2 14L14 2" stroke="#222" strokeWidth="1.500" /></svg></ToolButton>
                  <ToolButton $mr={4} aria-label="消去"><Eraser /></ToolButton>
                  <ToolButton $mr={6} aria-label="全消去"><Eraser all /></ToolButton>
                  <CheckLabel><input type="checkbox" />比較</CheckLabel>
                </ChartTools>
                <ChartArea>
                  <PriceChart />
                  <Legend>
                    <LegendButton aria-label="コメント"><svg width="18" height="16" viewBox="0 0 18 16"><path d="M1 1h16v11H6l-5 3z" fill="#6fbf2c" /><path d="M4 4.500h10M4 7h10M4 9.500h6" stroke="#fff" strokeWidth="1.200" /></svg></LegendButton>
                    <LegendButton aria-label="拡大"><Corners left /></LegendButton>
                    <LegendText>
                      <LegendLine $gap={4}>SMA<Swatch $c="#6ff3f0" />(25)<Swatch $c="#d50a17" />(75)<Swatch $c="#dd6612" />(200)</LegendLine>
                      <LegendLine $gap={0} $color="#666">買注文<Rule $s="dotted" $c="#c9303c" />売注文<Rule $s="dotted" $c="#3a3ad0" />買建<Rule $s="solid" $c="#f0a0a0" />売建<Rule $s="solid" $c="#9b3fc4" /></LegendLine>
                    </LegendText>
                  </Legend>
                </ChartArea>
              </ChartPanel>
            </Column>

            <Column>
              <Tabs $clip><Tab $w={87} $active>通常注文</Tab><Tab $w={87}>複合注文</Tab><Tab $w={87}>スピード注文</Tab></Tabs>
              <OrderPanel>
                <FormSelect><SelectWrap $w={179}><JapanIcon /><select aria-label="注文銘柄"><option>日本225</option></select><Caret /></SelectWrap></FormSelect>
                <RateBand>
                  <RateSide><div>BID (売)<PriceArrow up outlined size={14} /></div><strong>56978.8</strong></RateSide>
                  <RateSpread>JPY<b>2.4</b></RateSpread>
                  <RateSide><div><PriceArrow up outlined size={14} /></div></RateSide>
                </RateBand>
                <FormGrid>
                  <FormRow><span><NewBadge>新規</NewBadge></span><Choices><SwitchButton $w={64} $h={22}>売</SwitchButton><SwitchButton $w={64} $h={22}>買</SwitchButton></Choices></FormRow>
                  <FormRow><span>注文タイプ</span><Choices><SwitchButton $w={64} $h={22} $on="#78c81e">成行</SwitchButton><SwitchButton $w={64} $h={22}>指値</SwitchButton></Choices></FormRow>
                  <FormRow><label htmlFor="qty">取引数量</label><QuantityCell><input id="qty" defaultValue="1.0" /><svg width="8" height="16" fill="none" stroke="#333"><path d="M1 1h2l1 1 1-1h2M1 15h2l1-1 1 1h2M4 2v12" /></svg></QuantityCell></FormRow>
                  <FormRow><span /><Note>必要証拠金</Note></FormRow>
                  <FormRow><label htmlFor="slip">スリッページ</label><span><input id="slip" /></span></FormRow>
                  <SlipNote>(空欄時は制限無し)</SlipNote>
                </FormGrid>
                <ConfirmRow><CheckLabel><input type="checkbox" />確認省略</CheckLabel><ConfirmButton>確認画面へ</ConfirmButton></ConfirmRow>
              </OrderPanel>
              <NoticePanel><h2>約定・失効通知</h2></NoticePanel>
            </Column>
          </Columns>
        </Page>
        <VScroll><svg width="9" height="8"><path d="M0 0h9L4.500 8z" fill="#7d7d7d" /></svg></VScroll>
        <HScroll><ScrollArrow d="M7 0v9L1 4.500z" /><Thumb /><Spacer /><ScrollArrow d="M0 0v9l6-4.500z" /></HScroll>
      </Frame>

      <SpeedOrder />

      <Taskbar>
        <TaskSide>
          <svg width="28" height="28" viewBox="0 0 28 28"><path d="M8 25a5 5 0 0 1-1-9.800A7 7 0 0 1 20 14a5.500 5.500 0 0 1 1 11z" fill="#a9cdf0" /><path d="M6 25h17c-4-3-12-4-17 0z" fill="#d8e9fa" /><circle cx="20" cy="8" r="7.500" fill="#b5121f" /><text x="20" y="12" fontSize="11" fontFamily="Open Sans" fontWeight="600" fill="#fff" textAnchor="middle">5</text></svg>
          <div>8°C<br />くもり</div>
        </TaskSide>
        <TaskCenter>
          <svg width="24" height="24" viewBox="0 0 24 24"><defs><linearGradient id="win" x1="0" y1="0" x2="1" y2="1"><stop offset="0" stopColor="#45c0f0" /><stop offset="1" stopColor="#0a6cc8" /></linearGradient></defs><path d="M1 1h10.500v10.500H1zM12.500 1H23v10.500H12.500zM1 12.500h10.500V23H1zM12.500 12.500H23V23H12.500z" fill="url(#win)" /></svg>
          <TaskSearch><Search size={16} strokeWidth={2.4} color="#2b2430" /><input placeholder="検索" aria-label="検索" /><svg width="44" height="24" viewBox="0 0 40 24"><path d="M1 17c4 5 34 5 38 0l-2 5H3z" fill="#9cc9df" /><path d="M9 20V9l1-3 1-5 1 5 1 3v11zM22 20V9l1-3 1-5 1 5 1 3v11z" fill="#7fb4d3" /><path d="M13 14c3 3 6 3 9 0v2c-3 3-6 3-9 0zM28 20v-7h3v7zM33 20v-5h3v5zM4 20v-5h3v5zM15 20l1-5h1v5zM19 20v-5h1l1 5z" fill="#8fc0da" /></svg></TaskSearch>
          <TaskIcon aria-label="タスクビュー"><svg width="20" height="22" viewBox="0 0 20 22"><rect x="6" y="1" width="14" height="14" fill="#f7f7f7" /><path d="M1 7h5v8h9v6H1z" fill="#29242a" /><rect x="6" y="7" width="9" height="8" fill="#a9a5aa" /></svg></TaskIcon>
          <TaskIcon aria-label="Copilot"><Copilot size={22} /></TaskIcon>
          <TaskIcon aria-label="エクスプローラー"><svg width="22" height="22" viewBox="0 0 22 22"><path d="M2 3a2 2 0 0 1 2-2h4l2 3h9a2 2 0 0 1 2 2v12H2z" fill="#e5a91c" /><path d="M1 6h20v13a2 2 0 0 1-2 2H3a2 2 0 0 1-2-2z" fill="#fbd34f" /><path d="M5 15h12v6H5z" fill="#2385cf" /></svg></TaskIcon>
          <TaskIcon $active aria-label="Edge"><svg width="22" height="22" viewBox="0 0 24 24"><defs><linearGradient id="ea" x1="0" y1="0" x2="1" y2="0.6"><stop offset="0" stopColor="#1fa5dc" /><stop offset="1" stopColor="#5fd46a" /></linearGradient></defs><circle cx="12" cy="12" r="11.500" fill="#1668b8" /><path d="M.6 11C1.500 4.500 6.500.5 12 .5c7 0 11.500 4.500 11.500 9.500 0 3-2 5.500-5.500 5.500-2.500 0-4-.8-3.500-1.800C16 11 13.500 8 10 8 6 8 2 8.500.6 11z" fill="url(#ea)" /><path d="M10 9c-3.500 2-4 8-.5 11.500 3 2.500 7 2.500 10.500.5-1 1-4 2.500-8 2.500C6 23.500 1 19 .6 11.500 2 9 6 8 10 9z" fill="#1b8ad3" /><path d="M14.500 13.500c-1 1.500.8 2.500 3 3 2 .3 4-.5 5-1.500-.5 2-2 4.500-4 5.500-4 1-9-1.500-7.500-6 .5-2 2-3.500 3-3z" fill="#eef7fb" opacity=".9" /></svg></TaskIcon>
          <TaskIcon aria-label="Microsoft Store"><svg width="20" height="22" viewBox="0 0 20 22"><path d="M6 6V3a2 2 0 0 1 2-2h4a2 2 0 0 1 2 2v3" fill="none" stroke="#2b8fd6" strokeWidth="1.600" /><rect x="1" y="5" width="18" height="16" rx="2" fill="#1d4f86" /><path d="M5.500 8.500h4v4h-4z" fill="#ef5333" /><path d="M10.500 8.500h4v4h-4z" fill="#80bc28" /><path d="M5.500 13.500h4v4h-4z" fill="#2fa6ea" /><path d="M10.500 13.500h4v4h-4z" fill="#fdbb16" /></svg></TaskIcon>
          <TaskIcon $open aria-label="FXネオ"><FxoMouse size={20} /></TaskIcon>
          <TaskIcon $open aria-label="OBS"><svg width="26" height="24" viewBox="0 0 26 24"><circle cx="11" cy="13" r="9.500" fill="#26242b" /><path d="M8 7c4-1 6 2 4 6M4 16c1-4 5-5 7-3M16 18c-4 2-7-1-5-5" fill="none" stroke="#d9d9df" strokeWidth="1.700" /><circle cx="20" cy="6" r="5.500" fill="#e60f10" /></svg></TaskIcon>
        </TaskCenter>
        <TaskSide $end>
          <ChevronUp size={14} />
          <svg width="20" height="18" viewBox="0 0 20 18"><path d="M5 13a4 4 0 0 1 0-7.500A5.500 5.500 0 0 1 15 6" fill="none" stroke="#555" strokeWidth="1.400" /><circle cx="12.500" cy="11.500" r="6" fill="#1672c4" /><path d="M12.500 10.500v4M12.500 8v1.300" stroke="#fff" strokeWidth="1.500" /></svg>
          <Mic size={16} color="#2f5fb0" strokeWidth={1.6} />
          <Kana>あ</Kana>
          <TrayGroup><Wifi size={16} /><Volume2 size={15} strokeWidth={1.5} /></TrayGroup>
          <svg width="20" height="16" viewBox="0 0 20 16"><rect x="1" y="4" width="16" height="10" rx="2" fill="#3fa63b" stroke="#333" /><path d="M18.500 7v4" stroke="#333" strokeWidth="1.500" /><path d="M9 0v5M6 4h6l-1 4H7z" fill="#333" stroke="#222" /></svg>
          <Clock>16:58<br />2026/02/16</Clock>
        </TaskSide>
      </Taskbar>
    </Desktop>
  );
}
